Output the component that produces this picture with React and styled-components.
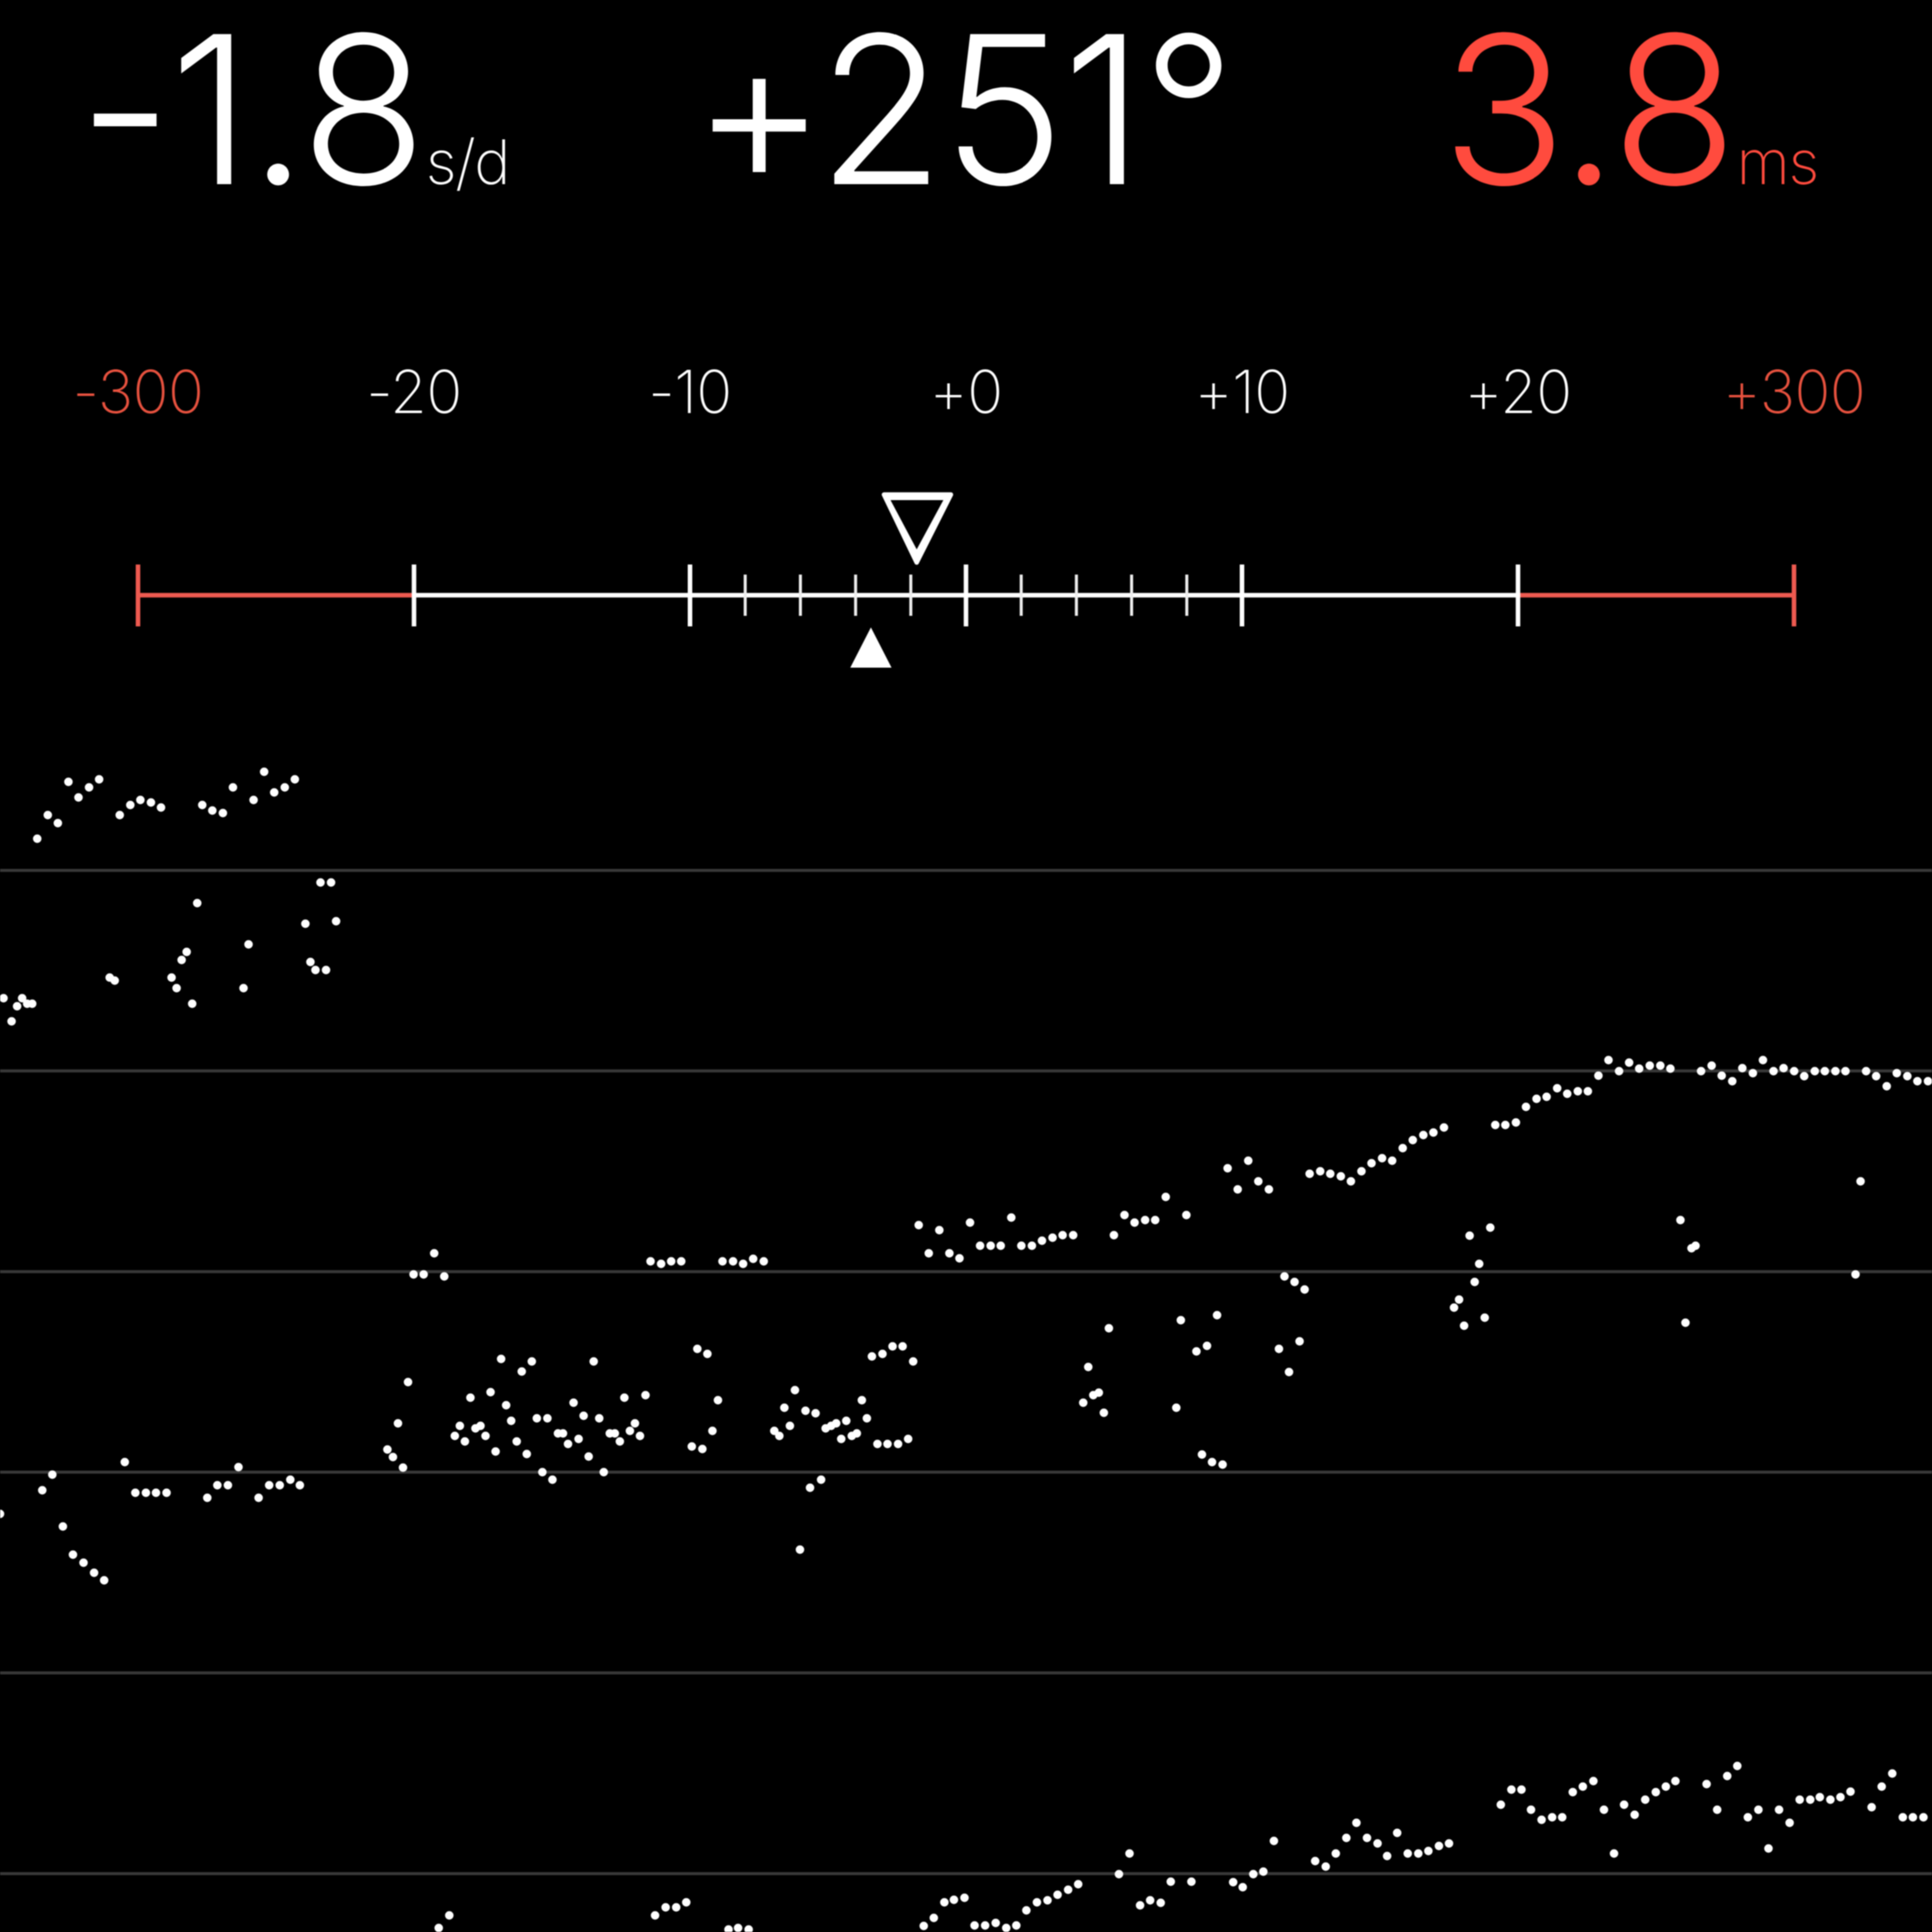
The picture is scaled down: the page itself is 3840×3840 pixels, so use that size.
import React from "react";
import styled, { createGlobalStyle } from "styled-components";

const RED = "#ff4b3e";
const SCALE_RED = "#ee5a50";

const GlobalStyle = createGlobalStyle`
  html, body {
    margin: 0;
    padding: 0;
    background: #000;
  }
`;

const Screen = styled.div`
  width: 3840px;
  height: 3840px;
  overflow: hidden;
  background: #000;
  color: #fff;
  display: flex;
  flex-direction: column;
  font-family: "Inter", "Liberation Sans", sans-serif;
  filter: blur(1px);
`;

const Readouts = styled.div`
  height: 480px;
  display: grid;
  grid-template-columns: 1006px 1412px 1422px;
`;

const Readout = styled.div`
  display: flex;
  align-items: baseline;
  box-sizing: border-box;
  height: 480px;
  padding-left: ${(p) => p.$pad || 0}px;
  padding-top: 20px;
  line-height: 395px;
  color: ${(p) => (p.$danger ? RED : "#fff")};
`;

const Value = styled.span`
  font-size: 410px;
  font-weight: 270;
  letter-spacing: -4px;
`;

const Unit = styled.span`
  font-size: 122px;
  font-weight: 250;
  letter-spacing: -3px;
  margin-left: 2px;
`;

const Labels = styled.div`
  height: 200px;
  margin-top: 200px;
  display: grid;
  grid-template-columns: repeat(7, 1fr);
`;

const TickLabel = styled.div`
  text-align: center;
  font-size: 118px;
  font-weight: 250;
  letter-spacing: -1px;
  line-height: 196px;
  color: ${(p) => (p.$danger ? "#e8523f" : "#fff")};
`;

const ScaleSvg = styled.svg`
  display: block;
  width: 3840px;
  height: 380px;
  margin-top: 80px;
`;

const ChartSvg = styled.svg`
  display: block;
  width: 3840px;
  height: 2340px;
  margin-top: 160px;
  flex: none;
`;

const labels = [
  { text: "-300", danger: true },
  { text: "-20" },
  { text: "-10" },
  { text: "+0" },
  { text: "+10" },
  { text: "+20" },
  { text: "+300", danger: true },
];

const STEP = 3840 / 7;
const majors = [0, 1, 2, 3, 4, 5, 6].map((i) => STEP / 2 + STEP * i);
const minors = [1, 2, 3, 4, 6, 7, 8, 9].map((i) => majors[2] + (STEP / 5) * i);
const gridLines = [1730, 2128.6, 2527.5, 2926, 3325, 3724];

// sampled points of the timegrapher trace, page coordinates
const dots = [
  [74,1667],[95,1620],[115,1636],[136,1554],[156,1585],[177,1565],[197,1549],[238,1620],[259,1600],[279,1590],[300,1595],[320,1605],
  [402,1600],[422,1611],[443,1616],[463,1565],[504,1590],[525,1534],[545,1575],[566,1565],[586,1549],
  [637,1754],[658,1754],[392,1795],[607,1836],[668,1831],[494,1877],[371,1892],[361,1908],[617,1912],[627,1928],[648,1928],
  [218,1943],[228,1949],[341,1943],[351,1964],[484,1964],[382,1995],[7,1984],[44,1984],[54,1995],[64,1995],[34,2000],[23,2030],
  [863,2491],[822,2533],[842,2533],[883,2537],[1293,2507],[1314,2512],[1334,2507],[1354,2507],[1436,2507],[1457,2507],[1477,2512],[1497,2502],[1518,2507],
  [1826,2435],[1867,2445],[1846,2491],[1887,2491],[1907,2501],[1928,2430],[1948,2476],[1969,2476],[1989,2476],[2010,2420],[2030,2476],[2051,2476],
  [2071,2466],[2092,2460],[2112,2455],[2133,2455],[2214,2455],[2235,2415],[2255,2430],[2276,2425],[2296,2425],[2317,2379],[2358,2415],
  [2440,2322],[2460,2364],[2481,2307],[2501,2348],[2522,2364],[2603,2333],[2624,2328],[2644,2333],[2665,2338],[2685,2348],[2706,2328],[2726,2312],[2747,2302],[2767,2307],
  [2788,2282],[2808,2266],[2829,2256],[2849,2251],[2870,2241],[2972,2236],[2992,2236],[3013,2231],[3033,2200],[3054,2184],[3074,2180],[3095,2163],[3115,2174],[3136,2169],[3156,2169],
  [3177,2138],[3197,2107],[3218,2129],[3238,2112],[3258,2124],[3279,2118],[3300,2118],[3320,2124],[3381,2129],[3402,2118],[3422,2138],[3443,2149],[3463,2123],[3484,2133],[3504,2107],
  [3525,2129],[3545,2123],[3566,2129],[3586,2139],[3607,2129],[3627,2129],[3648,2129],[3668,2129],[3709,2129],[3729,2139],[3750,2159],[3770,2133],[3791,2139],[3811,2149],[3832,2149],
  [3698,2348],[3340,2425],[2962,2440],[2921,2456],[3362,2481],[3370,2476],[2940,2512],[3688,2533],[2931,2548],[2553,2537],[2573,2548],[2593,2563],
  [2900,2583],[2890,2599],[2951,2619],[2910,2635],[3350,2629],[2419,2614],[2347,2624],[2204,2640],[2399,2675],[2378,2686],[2583,2666],[2542,2681],[2562,2727],
  [2163,2717],[2184,2768],[2173,2773],[2153,2788],[2194,2808],[2338,2798],[2389,2891],[2409,2906],[2430,2911],
  [811,2747],[791,2829],[770,2881],[781,2896],[801,2917],
  [996,2701],[1057,2706],[1037,2726],[1180,2706],[1386,2681],[1406,2691],[975,2767],[935,2778],[1006,2793],[1140,2788],[1241,2778],[1283,2773],[1427,2783],
  [1580,2763],[1559,2798],[1601,2804],[1621,2809],[1713,2783],[1733,2696],[1754,2691],[1774,2676],[1794,2676],[1815,2706],
  [914,2834],[955,2834],[945,2839],[1016,2824],[1067,2819],[1088,2819],[1160,2814],[1191,2819],[1262,2829],[1570,2834],[1682,2824],[1723,2819],[1662,2829],[1652,2834],[1641,2839],
  [904,2854],[965,2854],[924,2865],[1027,2865],[1109,2849],[1119,2849],[1150,2860],[1129,2870],[1212,2849],[1222,2849],[1252,2844],[1232,2865],[1272,2854],[1416,2844],[1539,2844],[1549,2854],
  [1672,2860],[1693,2854],[1703,2849],[1744,2870],[1764,2870],[1785,2870],[1805,2860],[1375,2875],[1396,2880],[985,2885],[1047,2890],[1170,2895],[1078,2926],[1098,2941],[1200,2926],
  [1632,2941],[1610,2957],[1590,3080],
  [248,2906],[104,2931],[84,2962],[0,3009],[125,3034],[145,3090],[166,3106],[187,3126],[207,3141],[269,2967],[290,2967],[310,2967],[331,2967],
  [412,2977],[432,2952],[453,2952],[474,2916],[514,2977],[535,2952],[556,2952],[577,2941],[596,2952],
  [893,3807],[872,3832],[1302,3807],[1323,3791],[1344,3791],[1364,3781],[1448,3835],[1467,3832],[1488,3835],[1836,3828],[1856,3812],[1877,3781],[1896,3776],[1917,3772],
  [1937,3827],[1958,3827],[1979,3822],[2000,3832],[2020,3827],[2040,3797],[2061,3781],[2082,3777],[2102,3766],[2123,3756],[2143,3745],[2224,3725],[2245,3684],[2266,3787],[2286,3777],[2307,3782],
  [2327,3740],[2368,3740],[2451,3741],[2470,3751],[2491,3725],[2511,3720],[2532,3659],[2614,3699],[2635,3710],[2655,3684],[2676,3653],[2696,3623],[2717,3653],[2738,3664],[2757,3689],[2777,3643],
  [2798,3684],[2819,3684],[2839,3679],[2860,3669],[2880,3664],[2983,3587],[3004,3557],[3024,3557],[3043,3597],[3064,3617],[3085,3612],[3105,3612],[3126,3562],[3146,3551],[3167,3540],
  [3188,3597],[3208,3684],[3228,3587],[3249,3607],[3270,3577],[3291,3562],[3311,3551],[3330,3540],[3392,3546],[3413,3597],[3433,3530],[3453,3510],[3474,3612],[3495,3597],[3515,3674],
  [3536,3597],[3557,3623],[3577,3577],[3598,3577],[3617,3572],[3638,3577],[3658,3572],[3678,3561],[3720,3592],[3740,3551],[3761,3525],[3782,3612],[3802,3612],[3823,3612],
];

function Scale() {
  return (
    <ScaleSvg viewBox="0 960 3840 380">
      <line x1={majors[0]} x2={majors[1]} y1="1183" y2="1183" stroke={SCALE_RED} strokeWidth="9" />
      <line x1={majors[1]} x2={majors[5]} y1="1183" y2="1183" stroke="#fff" strokeWidth="9" />
      <line x1={majors[5]} x2={majors[6]} y1="1183" y2="1183" stroke={SCALE_RED} strokeWidth="9" />
      {majors.map((x, i) => (
        <line
          key={x}
          x1={x}
          x2={x}
          y1="1122"
          y2="1245"
          stroke={i === 0 || i === 6 ? SCALE_RED : "#fff"}
          strokeWidth="9"
        />
      ))}
      {minors.map((x) => (
        <line key={x} x1={x} x2={x} y1="1142" y2="1224" stroke="#eee" strokeWidth="6" />
      ))}
      <polygon points="1757,983 1890,983 1822,1118" fill="#fff" stroke="#fff" strokeWidth="9" strokeLinejoin="round" />
      <polygon points="1770,994 1875,994 1822,1092" fill="#000" />
      <polygon points="1731,1247 1772,1327 1690,1327" fill="#fff" />
    </ScaleSvg>
  );
}

function Chart() {
  return (
    <ChartSvg viewBox="0 1500 3840 2340">
      {gridLines.map((y) => (
        <line key={y} x1="0" x2="3840" y1={y} y2={y} stroke="#383838" strokeWidth="6" />
      ))}
      {dots.map(([x, y], i) => (
        <circle key={i} cx={x} cy={y} r="8.5" fill="#fff" />
      ))}
    </ChartSvg>
  );
}

export default function App() {
  return (
    <Screen>
      <GlobalStyle />
      <Readouts>
        <Readout $pad={156}>
          <Value>-1.8</Value>
          <Unit>s/d</Unit>
        </Readout>
        <Readout $pad={369}>
          <Value>+251°</Value>
        </Readout>
        <Readout $danger $pad={447}>
          <Value>3.8</Value>
          <Unit>ms</Unit>
        </Readout>
      </Readouts>
      <Labels>
        {labels.map((l) => (
          <TickLabel key={l.text} $danger={l.danger}>
            {l.text}
          </TickLabel>
        ))}
      </Labels>
      <Scale />
      <Chart />
    </Screen>
  );
}
